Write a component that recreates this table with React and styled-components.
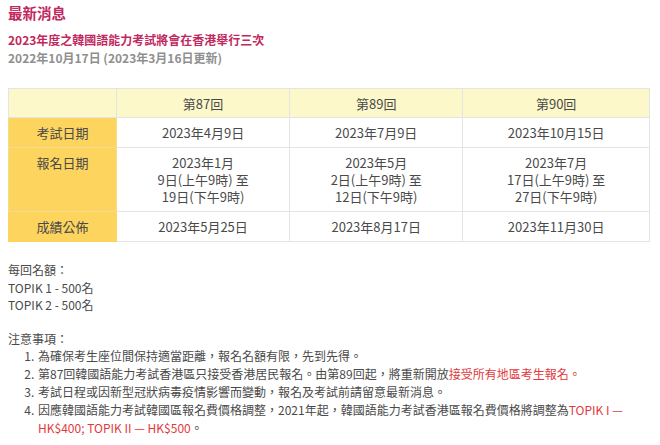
import React from "react"
import styled, { createGlobalStyle } from "styled-components"

const Global = createGlobalStyle`
  body {
    margin: 0;
    background: #fff;
    font-family: "Noto Sans CJK TC", "Noto Sans", sans-serif;
    color: #4a4a4a;
  }
`

const Page = styled.div`
  padding: 2px 10px 0 8px;
`

const Title = styled.h2`
  margin: 0;
  font-size: 14.5px;
  font-weight: 700;
  color: #c1285e;
  line-height: 21px;
`

const SubTitle = styled.div`
  margin-top: 8px;
  font-size: 12px;
  font-weight: 700;
  color: #c1285e;
  line-height: 18px;
`

const DateLine = styled.div`
  font-size: 12px;
  font-weight: 700;
  color: #8f8f8f;
  line-height: 18px;
`

const Table = styled.table`
  margin-top: 21px;
  width: 642px;
  border-collapse: collapse;
  font-size: 13px;
  color: #4a4a4a;
  td, th {
    border: 1px solid #e4e4e4;
    text-align: center;
    font-weight: 400;
    line-height: 17px;
  }
`

const HeadCell = styled.th`
  background: #fdf8c9;
  height: 28px;
  padding: 0;
`

const RowHead = styled.td`
  background: #fcd45e;
  width: 107px;
  vertical-align: top;
  padding: 6px 0;
  && { border-color: ${p => (p.$last ? "#fcd45e" : "#f3dc92")}; }
`

const Cell = styled.td`
  padding: 6px 0;
  vertical-align: top;
`

const Block = styled.div`
  margin-top: ${p => p.$top || 0}px;
  font-size: 12px;
  line-height: 17.5px;
`

const Notes = styled.ol`
  margin: 0;
  padding-left: 29px;
  font-size: 12px;
  line-height: 18px;
  li { padding-left: 1px; }
`

const Red = styled.span`
  color: #e3393c;
`

const rounds = [
  { name: "第87回", exam: "2023年4月9日", reg: ["2023年1月", "9日(上午9時) 至", "19日(下午9時)"], result: "2023年5月25日" },
  { name: "第89回", exam: "2023年7月9日", reg: ["2023年5月", "2日(上午9時) 至", "12日(下午9時)"], result: "2023年8月17日" },
  { name: "第90回", exam: "2023年10月15日", reg: ["2023年7月", "17日(上午9時) 至", "27日(下午9時)"], result: "2023年11月30日" },
]

export default function App() {
  return (
    <Page>
      <Global />
      <Title>最新消息</Title>
      <SubTitle>2023年度之韓國語能力考試將會在香港舉行三次</SubTitle>
      <DateLine>2022年10月17日 (2023年3月16日更新)</DateLine>
      <Table>
        <thead>
          <tr>
            <HeadCell style={{ width: 107 }}></HeadCell>
            {rounds.map(r => <HeadCell key={r.name}>{r.name}</HeadCell>)}
          </tr>
        </thead>
        <tbody>
          <tr>
            <RowHead>考試日期</RowHead>
            {rounds.map(r => <Cell key={r.name}>{r.exam}</Cell>)}
          </tr>
          <tr>
            <RowHead>報名日期</RowHead>
            {rounds.map(r => (
              <Cell key={r.name}>{r.reg.map(l => <div key={l}>{l}</div>)}</Cell>
            ))}
          </tr>
          <tr>
            <RowHead $last>成績公佈</RowHead>
            {rounds.map(r => <Cell key={r.name}>{r.result}</Cell>)}
          </tr>
        </tbody>
      </Table>
      <Block $top={19}>
        每回名額：<br />
        TOPIK 1 - 500名<br />
        TOPIK 2 - 500名
      </Block>
      <Block $top={16}>注意事項：</Block>
      <Notes>
        <li>為確保考生座位間保持適當距離，報名名額有限，先到先得。</li>
        <li>第87回韓國語能力考試香港區只接受香港居民報名。由第89回起，將重新開放<Red>接受所有地區考生報名。</Red></li>
        <li>考試日程或因新型冠狀病毒疫情影響而變動，報名及考試前請留意最新消息。</li>
        <li>因應韓國語能力考試韓國區報名費價格調整，2021年起，韓國語能力考試香港區報名費價格將調整為<Red>TOPIK I — HK$400; TOPIK II — HK$500</Red>。</li>
      </Notes>
    </Page>
  )
}
